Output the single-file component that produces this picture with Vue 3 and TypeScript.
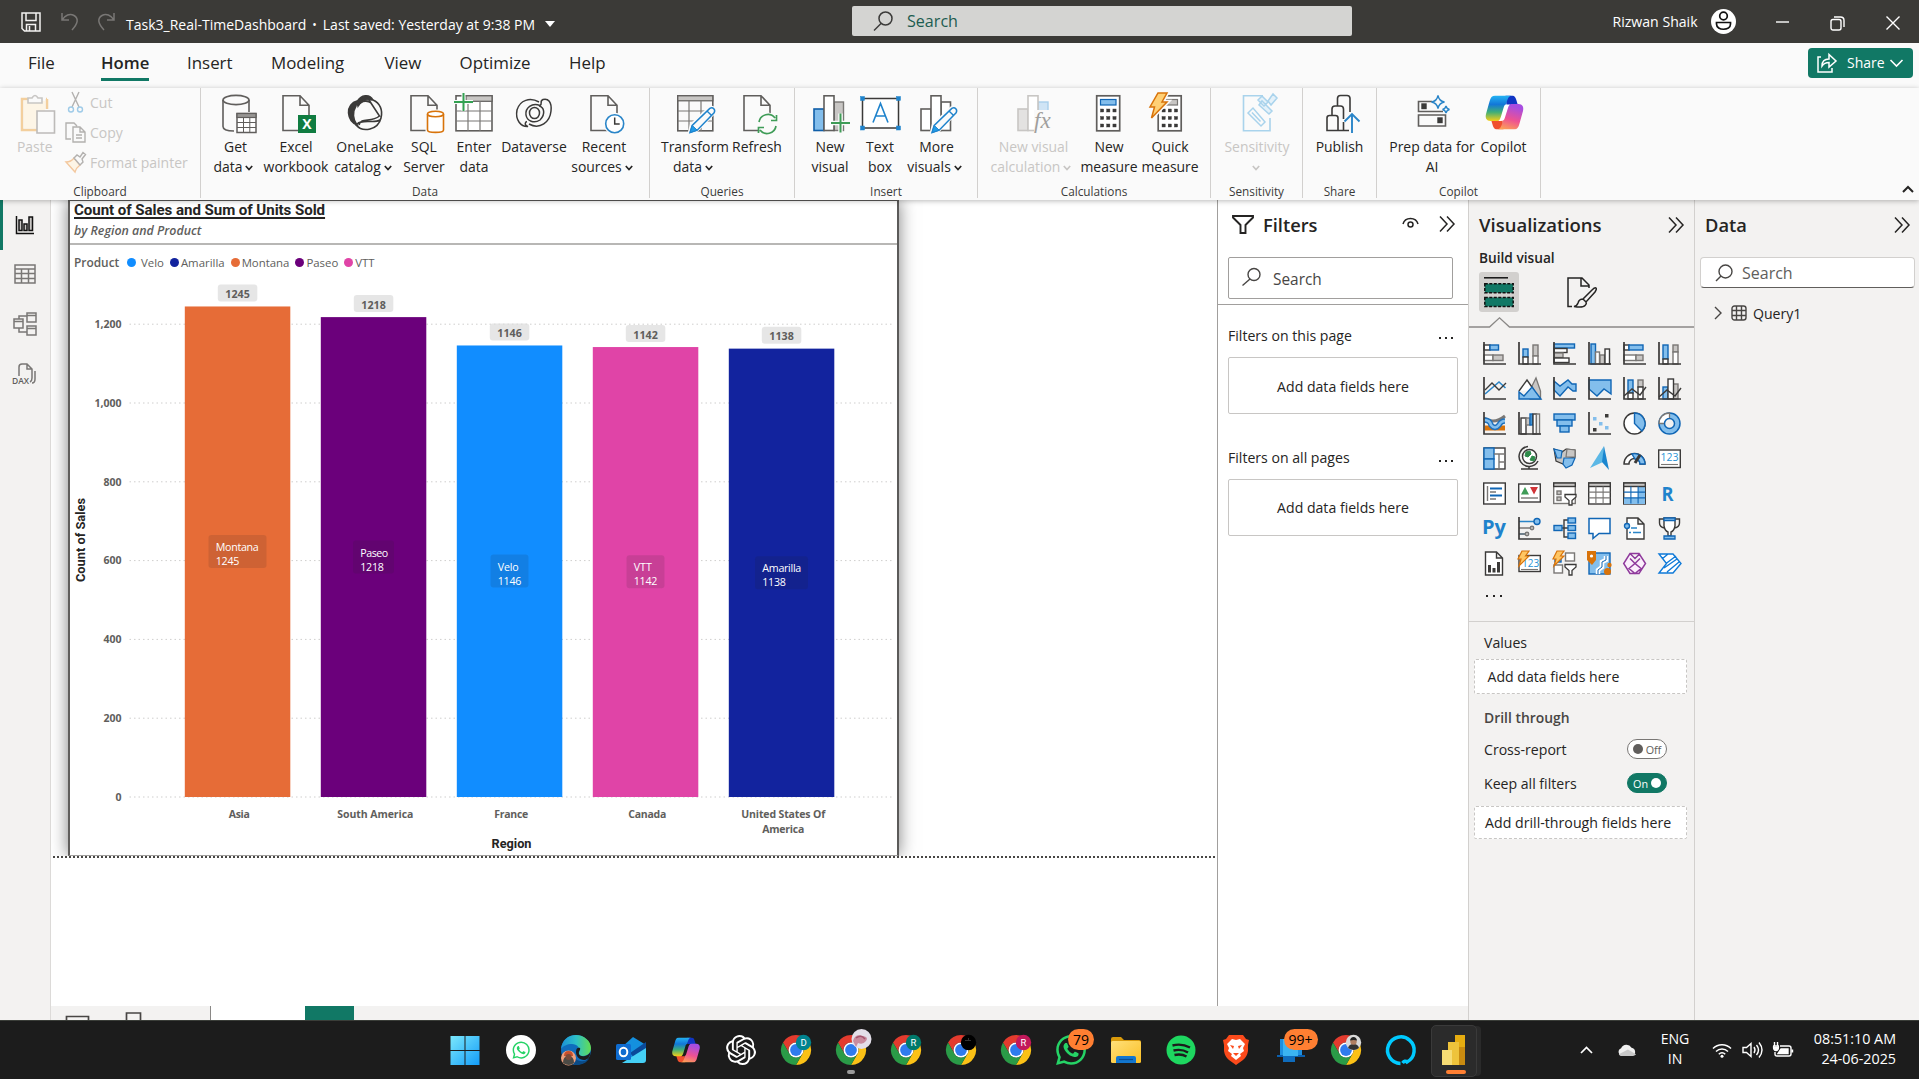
<script setup lang="ts">
interface RibbonItem { icon: string; lines: string[]; w: number; caret?: boolean; off?: boolean }
interface RibbonGroup { name: string; w: number; pad: number; items: RibbonItem[] }

const INK = '#3b3a39'
const GREY = '#797775'
const SILVER = '#c8c6c4'
const BLUE = '#1066b5'
const SKY = '#83beec'

const rect = (x: number, y: number, w: number, h: number, fill = '#fff', stroke = INK, sw = 1.4) =>
  `<rect x="${x}" y="${y}" width="${w}" height="${h}" fill="${fill}" stroke="${stroke}" stroke-width="${sw}"/>`
const line = (d: string, stroke = INK, sw = 1.4, fill = 'none') =>
  `<path d="${d}" fill="${fill}" stroke="${stroke}" stroke-width="${sw}"/>`
const dot = (x: number, y: number, r: number, fill: string, stroke = 'none', sw = 1.4) =>
  `<circle cx="${x}" cy="${y}" r="${r}" fill="${fill}" stroke="${stroke}" stroke-width="${sw}"/>`

const page = line('M9 1.7h17l9 9.5V36.5H9zM26 1.7v9.5h9', '#605e5c', 1.6, '#fafafa')
const pencil =
  line('M16.5 39l2-8 18-17q2.5-1 4 .5t.5 4L24 36z', '#fafafa', 3.5, '#fafafa') +
  line('M17 38.6l2.2-7.2 17.6-17q2.4-1.3 4 .4t.3 4L24.2 36.2z', '#1f83cc', 1.5, '#fafafa') +
  line('M17 38.6l2.2-7.2 5 4.8z', '#1f83cc', 1, '#1f9be8') + line('M34 17l4.6 4.6', '#1f83cc')
const bolt = line('M10-1h9l-5 9h5L3.5 24l3-11H2z', '#d8730a', 1.5, '#ffd075')
const keys = (x: number) => [15, 22.5, 30].map(y => [0, 6.2, 12.4].map(d => rect(x + d, y, 3.2, 3, INK, INK, 0.4)).join('')).join('')

const big: Record<string, string> = {
  getData:
    line('M9 6v26.5c0 3 5 4.500 11 4.500M35 6v12', '#605e5c', 1.6) +
    `<ellipse cx="22" cy="6" rx="13" ry="4.600" fill="none" stroke="#605e5c" stroke-width="1.6"/>` +
    rect(23, 19.500, 19, 19, '#fff', '#605e5c', 1.500) + rect(23, 19.500, 19, 4, '#979593', '#605e5c', 1.200) +
    line('M29.500 24v14M35.800 24v14M23 28.500h19M23 33.500h19', '#605e5c', 1),
  excel: page + rect(24.500, 21.500, 17, 17, '#107c41', '#107c41', 1) +
    '<text x="33" y="35" text-anchor="middle" font-size="14" font-weight="700" font-family="Open Sans, sans-serif" fill="#fff">X</text>',
  oneLake: line('M5.500 19C5 13 9 8 14 7L13 12C9 18 10 26 14 31C9 29 6 25 5.500 19z', INK, 1.500, INK) +
    line('M14 8C18 0 27 0 30 6C24 5 18 6 15 12z', INK, 1.500, INK) +
    line('M30 6C37 9 40 16 38 24C35 36 20 39 13 31C19 24 31 30 37 26M26 6L36.500 22C28 29 18 23 16 31M15 12C19 5 26 7 28 9', INK, 1.600),
  sql: page + rect(24, 16, 18, 24, '#fafafa', '#fafafa', 1) +
    line('M25.500 20v16c0 3.200 16 3.200 16 0V20', '#d8730a', 1.600, '#fff') +
    '<ellipse cx="33.500" cy="20" rx="8" ry="2.800" fill="#fff" stroke="#d8730a" stroke-width="1.600"/>',
  enter: rect(4, 1.800, 36, 35, '#fff', '#605e5c', 1.600) + rect(14, 1.800, 26, 5.500, '#c8c6c4', '#605e5c', 1.200) +
    line('M16 7v30M28 7v30M4 17h36M4 27h36', GREY, 1.200) + line('M2 8h19M11.500-1v18', '#fafafa', 4) + line('M2 8h19M11.500-1v18', '#33a152', 2),
  dataverse: line('M27 8C18 3 8 6 5 16C3 26 9 33 16 32.500C12 31 13 28 15 27.500M17 30C28 36 38 28 39 17C40 8 36 4 31 5.500C27 7 31 10 28 11.500C20 8 13 14 14 21C15 27 22 30 28 26C34 20 32 13 27 12', INK, 1.500) +
    '<ellipse cx="22.500" cy="19" rx="5" ry="5.500" fill="none" stroke="#3b3a39" stroke-width="1.500"/>',
  recent: page + dot(32.700, 29.700, 11, '#fafafa') + dot(32.700, 29.700, 9, '#fff', '#2a85c8', 1.600) + line('M32.700 23.500V30h5', INK, 1.500),
  transform: rect(4.800, 1.800, 35, 35, '#fafafa', '#605e5c', 1.600) + rect(4.800, 1.800, 35, 5, '#c8c6c4', '#605e5c', 1.200) +
    line('M16 7v30M28 7v30M5 17h35M5 27h35', GREY, 1.200) + pencil,
  refresh: page + dot(32.500, 29.500, 11, '#fafafa') +
    line('M24 28a9 9 0 0 1 16-4M41.500 21v5.500H36M41 32a9 9 0 0 1-16 4M23.500 39v-5.500H29', '#3f9c57', 1.700),
  newVisual: rect(6, 15, 10, 21.500, '#83beec', '#0f5ea8', 1.600) + rect(26, 8, 9.500, 28.500, SILVER, GREY) + rect(16, 1.800, 10, 34.700, '#fff', '#605e5c', 1.600) +
    line('M23 29h19M32.500 19.500v19', '#fafafa', 4.500) + line('M23 29h19M32.500 19.500v19', '#3f9c57', 2),
  textBox: rect(4.500, 4.500, 36, 29.500, '#fff', INK, 1.500) +
    [[4.500, 4.500], [40.500, 4.500], [4.500, 34], [40.500, 34]].map(([x, y]) => rect(x - 2, y - 2, 4, 4, '#1f83cc', '#1f83cc', 0.500)).join('') +
    line('M15 28.500L22.500 9.500 30 28.500M17.500 22h10', '#1f83cc', 1.600),
  moreVisuals: rect(6, 15, 10, 21.500, '#fff', '#605e5c', 1.600) + rect(26, 8, 9.500, 28.500, '#fff', '#605e5c', 1.600) + rect(16, 1.800, 10, 34.700, '#fff', '#605e5c', 1.600) + pencil,
  visualCalc: rect(6, 15, 10, 21.500, '#e3e2e1', '#c8c6c4', 1.600) + rect(26, 8, 10, 12, '#cfe4f5', '#a9cfec', 1.400) + rect(16, 1.800, 10, 34.700, '#fff', '#c8c6c4', 1.600) +
    '<rect x="22" y="16" width="22" height="24" fill="#fafafa"/><text x="22" y="34" font-size="23" font-style="italic" font-family="Liberation Serif, serif" fill="#a19f9d">fx</text>',
  newMeasure: rect(9.700, 1.800, 23, 35, '#fff', '#605e5c', 1.700) + rect(13.500, 5.500, 15.500, 5.500, SKY, BLUE, 1.200) + keys(13.500),
  quick: rect(10.200, 1.800, 23, 35, '#fff', '#605e5c', 1.700) + rect(14, 5.500, 15.500, 5.500, SILVER, GREY, 1.200) + keys(14) +
    line('M10-1h9l-5 9h5L3.500 24l3-11H2z', '#fafafa', 4.500, '#fafafa') + bolt,
  sensitivity: line('M28 1.700H8.500v35h26.500V24', '#a9d3ec', 1.600) +
    line('M13 19l5-5 12 14-4 4zM17 18.500l8.500 9', '#a9d3ec', 1.500) + line('M23 6l4-4 6 6-4 4zM33 7l5-7 4 4-6 7zM24 11l10 9 3-3-10-10z', '#a9d3ec', 1.500, '#e4f1f9'),
  publish: line('M32 18V4.500q0-3-3-3h-6.500q-3 0-3 3V12M14 21.500v-6.500q0-3 3-3h5.500q3 0 3 3V25M25.500 28v8.500M9 36.500V24q0-2.500 2.500-2.500h6q2.500 0 2.500 2.500v12.500zM8.500 36.500H31', INK, 1.600) +
    line('M34 39V20M26.500 27.500L34 20l7.500 7.500', '#2a85c8', 1.900),
  prep: line('M22 7.500H8.500v10H33M8.500 21h27v11h-27z', '#605e5c', 1.600) + rect(12, 10, 4, 4.500, INK, INK) + rect(28, 24, 4, 4.500, INK, INK) +
    line('M28 1.500q1 5.500 6.500 6.500-5.500 1-6.500 6.500-1-5.500-6.500-6.500 5.500-1 6.500-6.500zM36 12q.6 2.800 3.500 3.500-2.900.7-3.500 3.500-.6-2.800-3.500-3.500 2.900-.7 3.500-3.500z', '#2a85c8', 1.400, '#fafafa'),
  copilot: '<use href="#copilot-mark" x="3" y="1.500" width="39" height="34" color="#fff"/>',
}

const groups: RibbonGroup[] = [
  { name: 'Data', w: 449, pad: 11, items: [
    { icon: 'getData', lines: ['Get', 'data'], w: 47, caret: true },
    { icon: 'excel', lines: ['Excel', 'workbook'], w: 74 },
    { icon: 'oneLake', lines: ['OneLake', 'catalog'], w: 64, caret: true },
    { icon: 'sql', lines: ['SQL', 'Server'], w: 54 },
    { icon: 'enter', lines: ['Enter', 'data'], w: 46 },
    { icon: 'dataverse', lines: ['Dataverse'], w: 74 },
    { icon: 'recent', lines: ['Recent', 'sources'], w: 66, caret: true },
  ] },
  { name: 'Queries', w: 145, pad: 11, items: [
    { icon: 'transform', lines: ['Transform', 'data'], w: 68, caret: true },
    { icon: 'refresh', lines: ['Refresh'], w: 56 },
  ] },
  { name: 'Insert', w: 183, pad: 11, items: [
    { icon: 'newVisual', lines: ['New', 'visual'], w: 48 },
    { icon: 'textBox', lines: ['Text', 'box'], w: 52 },
    { icon: 'moreVisuals', lines: ['More', 'visuals'], w: 61, caret: true },
  ] },
  { name: 'Calculations', w: 233, pad: 12, items: [
    { icon: 'visualCalc', lines: ['New visual', 'calculation'], w: 87, caret: true, off: true },
    { icon: 'newMeasure', lines: ['New', 'measure'], w: 64 },
    { icon: 'quick', lines: ['Quick', 'measure'], w: 58 },
  ] },
  { name: 'Sensitivity', w: 92, pad: 11, items: [{ icon: 'sensitivity', lines: ['Sensitivity', ''], w: 70, caret: true, off: true }] },
  { name: 'Share', w: 74, pad: 11, items: [{ icon: 'publish', lines: ['Publish'], w: 51 }] },
  { name: 'Copilot', w: 164, pad: 11, items: [
    { icon: 'prep', lines: ['Prep data for', 'AI'], w: 88 },
    { icon: 'copilot', lines: ['Copilot'], w: 55 },
  ] },
]

const tabs = [
  { t: 'File', w: 73 }, { t: 'Home', w: 86 }, { t: 'Insert', w: 84 }, { t: 'Modeling', w: 113.5 },
  { t: 'View', w: 75 }, { t: 'Optimize', w: 109.5 }, { t: 'Help', w: 60 },
]

const axis = line('M1 0v22h22', INK, 1.700)
const grid3 = (x: number, y: number, w: number, h: number, c: string) =>
  line(`M${x + w / 3} ${y}v${h}M${x + (2 * w) / 3} ${y}v${h}M${x} ${y + h / 3}h${w}M${x} ${y + (2 * h) / 3}h${w}`, c, 1.100)
const num = (x: number, y: number, s: number) =>
  `<text x="${x}" y="${y}" font-size="${s}" font-family="Open Sans, sans-serif" fill="#2a93d5">123</text>`
const smallBolt = line('M4-1h7l-3.500 5H11L1 14l2-7H0z', '#d8730a', 1.200, '#ffc663')
const funnel = line('M12 12.500h11v2.500l-4 3.500V23h-3v-4.500L12 15z', INK, 1.300, '#fff')

const visuals: string[] = [
  rect(1, 3, 6, 5) + rect(7, 3, 8.500, 5, SKY, BLUE) + rect(1, 13, 9, 5.500, '#fff', GREY) + rect(10, 13, 10, 5.500, SILVER, GREY) + axis,
  rect(5, 7, 5, 8, SKY, BLUE) + rect(5, 15, 5, 7) + rect(15, 3, 5, 11, SILVER, GREY) + rect(15, 14, 5, 8, '#fff', GREY) + axis,
  rect(1, 2, 20.500, 4, SKY, BLUE) + rect(1, 6.500, 13, 4) + rect(1, 11, 9, 4.500, SILVER, GREY) + rect(1, 16, 15, 4.500) + axis,
  rect(3, 2, 4.500, 20, SKY, BLUE) + rect(7.500, 10, 4, 12, '#fff', GREY) + rect(12, 13, 4.500, 9, SILVER, GREY) + rect(17, 7, 4.500, 15) + axis,
  rect(1, 3, 5, 5) + rect(6, 3, 14, 5, SKY, BLUE) + rect(1, 13, 12, 5.500, '#fff', GREY) + rect(13, 13, 7, 5.500, SILVER, GREY) + axis,
  rect(5, 3, 5, 14, SKY, BLUE) + rect(5, 17, 5, 5) + rect(15, 3, 5, 7, SILVER, GREY) + rect(15, 10, 5, 12, '#fff', GREY) + axis,
  line('M2 17L16 5l6.500 6', '#2a85c8', 1.600) + line('M2 13l7-7 7 7 7-7') + axis,
  line('M12 13L18 1l4.500 13v8H12z', GREY, 1.300, SILVER) + line('M1 14L9 3l7 10', INK, 1.400, '#fff') + line('M1 22v-7l5 4 8-9 9 12z', BLUE, 1.400, SKY),
  line('M1 4l6 5 8-6 4 4h4v7h-3l-5-4-8 9-6-6z', BLUE, 1.400, SKY) + axis,
  line('M1 3h22v14l-7-5-7 7-8-7z', BLUE, 1.400, SKY) + axis,
  rect(5, 3, 5, 13, SKY, BLUE) + rect(5, 16, 5, 6) + rect(15, 3, 5, 7, SILVER, GREY) + rect(15, 10, 5, 12) + line('M1 19l8-7 8 6 6-8') + axis,
  rect(5, 10, 5, 12, SKY, BLUE) + rect(15, 7, 5, 15, SILVER, GREY) + rect(10, 2, 5.500, 20) + line('M1 20l8-7 8 6 6-8') + axis,
  line('M2 16h20', '#d8730a', 5) + line('M1 6q10 7 21-2', GREY, 3, 'none') + line('M1 8q6 0 7 5 4 5 8 0 2-4 6-4', '#1f72bd', 5.500) + line('M1 8q6 0 7 5 4 5 8 0 2-4 6-4', SKY, 2.700) + axis,
  rect(3, 6, 5, 16) + rect(8, 6, 4, 7, SILVER, GREY) + rect(12, 2, 2.500, 11, '#4e9edb', BLUE) + rect(15, 2, 3.500, 20) + rect(18.500, 2, 3, 20, '#fff', GREY) + axis,
  rect(1, 2, 21, 6, SKY, BLUE) + rect(4, 8, 15, 6, SKY, BLUE) + rect(7, 14, 9, 6, SKY, BLUE),
  [[5, 5, SKY], [17, 2, INK], [11, 10, SKY], [17, 14, SKY], [5, 16, INK]].map(([x, y, c]) => `<rect x="${x}" y="${y}" width="3.500" height="3.500" fill="${c}"/>`).join('') + axis,
  dot(11.500, 11.500, 10.500, '#fff', INK, 1.500) + line('M11.500 1v10.500l7.400 7.400A10.500 10.500 0 0 0 11.500 1z', BLUE, 1.400, SKY),
  dot(11.500, 11.500, 10.500, SKY, BLUE, 1.500) + line('M11.500 1A10.500 10.500 0 0 0 1 11.500h6A5 5 0 0 1 11.500 6.500z', GREY, 1.300, '#fff') + dot(11.500, 11.500, 5, '#f3f2f1', BLUE, 1.500),
  rect(1, 1, 21, 21) + rect(1, 1, 10, 11, SKY, BLUE) + rect(1, 12, 10, 10, SKY, BLUE) + line('M11 7h11M16 7v15M16 15h6', GREY),
  dot(11.500, 9.500, 7, '#fff', INK, 1.500) + line('M8 5l4-1 1 3-3 3-3-1zM14 9l3 1-1 4-4-1z', '#2e8b4a', 1, '#2e8b4a') + line('M10-.5A10 10 0 1 0 20 14M11 19v3M3 22h17', INK, 1.500),
  line('M1 2l8 3 4-3 9 1v7l-9 2-3 5-7-3z', INK, 1.200, SILVER) + line('M1 2l8 2-1 7H4zM11 11h11l-3 7-6 3-3-4z', BLUE, 1.200, SKY) + line('M14 2l8 1v7h-9z', GREY, 1.200, SILVER),
  '<path d="M16-1L2 21l13-6z" fill="#5bb8e6"/><path d="M16-1l5 24-7-8z" fill="#1a86cf"/>',
  line('M1 17a10.500 10.500 0 0 1 21 0h-5a5.500 5.500 0 0 0-11 0z', INK, 1.400, '#fff') + line('M9 7a10.500 10.500 0 0 1 13 10h-5a5.500 5.500 0 0 0-5-5z', BLUE, 1.400, SKY) + line('M17 8l-5 8', INK, 3),
  rect(0.700, 3, 21.600, 17.500, '#fff', INK, 1.400) + num(2.500, 14, 10.500) + line('M3 17.500h17', GREY, 1.100),
  rect(0.700, 1, 21.600, 21) + line('M4.500 4v15M7 10h6M7 17h6', GREY) + line('M7 6.500h12M7 13.500h12', '#1066b5', 2),
  rect(0.700, 2, 21.600, 18) + '<path d="M3 12.500L7 5l4 7.500z" fill="#3f9c57"/><path d="M12 5h8l-4 7.500z" fill="#d13438"/>' + line('M3 16h17', GREY),
  rect(0.700, 1, 21.600, 20.500, '#fff', GREY) + rect(0.700, 1, 21.600, 3.500, SILVER, INK) + rect(4, 9, 4, 3.500, SILVER, GREY) + rect(4, 15, 4, 3.500, SILVER, GREY) + funnel,
  rect(0.700, 1, 21.600, 21) + rect(0.700, 1, 21.600, 3.500, SILVER, INK) + grid3(0.700, 4.500, 21.600, 17, GREY),
  rect(0.700, 1, 21.600, 21) + '<path d="M15 5h7v17H1v-6h14z" fill="#83beec"/>' + rect(0.700, 1, 21.600, 3.500, SILVER, INK) + grid3(0.700, 4.500, 21.600, 17, '#1066b5'),
  '<text x="3.500" y="19" font-size="20" font-weight="700" font-family="Open Sans, sans-serif" fill="#1f83cc" textLength="12" lengthAdjust="spacingAndGlyphs">R</text>',
  '<text x="-1" y="17" font-size="20" font-weight="700" font-family="Open Sans, sans-serif" fill="#1f83cc" textLength="24" lengthAdjust="spacingAndGlyphs">Py</text>',
  line('M1 4.500h15M1 17h8', '#2a85c8') + line('M1 11h12M1 17h7', GREY) + dot(19, 4.500, 3, SKY, BLUE) + dot(14, 11, 1.700, SILVER, GREY) + dot(9, 17, 1.700, SILVER, GREY) + axis,
  line('M8 11h3V3h4M11 11h4M11 11v9h4') + rect(1, 8.500, 8, 5, SKY, BLUE) + rect(15, 1, 7.500, 5, SKY, BLUE) + rect(15, 8.500, 7.500, 5, SKY, BLUE) + rect(15, 16, 7.500, 5.500, SKY, BLUE),
  line('M1 1.500h21v15H11L5 21.500v-5H1z', BLUE, 1.500, '#fff'),
  line('M4 8V1h11l6 6v15H4V12M15 1v6h6', INK, 1.400, '#fff') + dot(4, 9, 2.500, SKY, BLUE) + line('M8 11h6M10 15.500h8M6 15.500h2', '#2a85c8'),
  line('M6 2H1.500v4q0 4 5 5M17 2h4.500v4q0 4-5 5') + line('M6 1h11v8q-1 5-4 6v4h-3v-4q-3-1-4-6z', INK, 1.400, '#fff') + line('M6 1h11v2.500H6zM6 19h11v3H6z', BLUE, 1.300, SKY),
  line('M2.500 0h11l6 6v17h-17zM13.500 0v6h6', INK, 1.400, '#fff') + '<path d="M5 13h3v7.500H5zM9.500 16h3v4.500h-3zM14 10h3v10.500h-3z" fill="#3b3a39"/>',
  rect(1, 3.500, 21.300, 16, '#fff', INK) + num(4, 15, 10) + line('M3 17.500h17', GREY, 1.100) + smallBolt,
  rect(12.500, 1, 9, 8, '#fff', GREY) + rect(1, 13, 8.500, 8, '#fff', GREY) + rect(2, 5, 6, 5, SKY, BLUE) + funnel + smallBolt,
  rect(1, 1, 21, 21, SKY, BLUE) + line('M18 4v4l-4 2v5l-4 3v4', '#fff', 4.500) + line('M18 4v4l-4 2v5l-4 3v4', BLUE, 1) + '<path d="M-1-1h9v9l-4 5-5-5z" fill="#d8730a"/>' + dot(3.500, 4, 1.600, '#fff') + dot(19.500, 19.500, 3.500, '#d8730a') + dot(21.500, 13, 2.200, '#d8730a'),
  line('M7 1.500h9l6.500 10-6.500 10H7L.7 11.500zM7 1.500l5 5 5-5M7 6.500l5 5 5-5M6 16.500l6-5 6 5-6 5z', '#8f3a9c', 1.500, '#fbeffc'),
  line('M1 2h14l8 9.500-8 9.500H1l7.500-9.500zM4 7L10 2M8 11.500L18 4M6 16l13-9M9 20l12-10', '#0f7ad8', 1.400, '#fff'),
]

interface Bar { region: string[]; product: string; value: number; color: string; x: number; boxW: number; chip: number }
const bars: Bar[] = [
  { region: ['Asia'], product: 'Montana', value: 1245, color: '#e66c37', x: 185.3, boxW: 58, chip: 535 },
  { region: ['South America'], product: 'Paseo', value: 1218, color: '#6b007b', x: 321.3, boxW: 41, chip: 540.500 },
  { region: ['France'], product: 'Velo', value: 1146, color: '#118dff', x: 457.3, boxW: 38, chip: 554.500 },
  { region: ['Canada'], product: 'VTT', value: 1142, color: '#e044a7', x: 593.3, boxW: 38, chip: 555.300 },
  { region: ['United States Of', 'America'], product: 'Amarilla', value: 1138, color: '#12239e', x: 729.3, boxW: 53, chip: 556.300 },
]
const productW: Record<string, number> = { Montana: 43, Paseo: 28, Velo: 21, VTT: 18, Amarilla: 39 }
const regionW: Record<string, number> = { Asia: 21, 'South America': 76, France: 34, Canada: 38, 'United States Of': 84, America: 42 }
const barTop = (v: number) => 797 - v * 0.394
const ticks = [0, 200, 400, 600, 800, 1000, 1200]
const legend = [
  { n: 'Velo', c: '#118dff' }, { n: 'Amarilla', c: '#12239e' }, { n: 'Montana', c: '#e66c37' },
  { n: 'Paseo', c: '#6b007b' }, { n: 'VTT', c: '#e044a7' },
]

const whatsapp = 'M17.472 14.382c-.297-.149-1.758-.867-2.03-.967-.273-.099-.471-.148-.67.15-.197.297-.767.966-.94 1.164-.173.199-.347.223-.644.075-.297-.15-1.255-.463-2.39-1.475-.883-.788-1.48-1.761-1.653-2.059-.173-.297-.018-.458.13-.606.134-.133.298-.347.446-.52.149-.174.198-.298.298-.497.099-.198.05-.371-.025-.52-.075-.149-.669-1.612-.916-2.207-.242-.579-.487-.5-.669-.51-.173-.008-.371-.01-.57-.01-.198 0-.52.074-.792.372-.272.297-1.04 1.016-1.04 2.479 0 1.462 1.065 2.875 1.213 3.074.149.198 2.096 3.2 5.077 4.487.709.306 1.262.489 1.694.625.712.227 1.36.195 1.871.118.571-.085 1.758-.719 2.006-1.413.248-.694.248-1.289.173-1.413-.074-.124-.272-.198-.57-.347m-5.421 7.403h-.004a9.87 9.87 0 01-5.031-1.378l-.361-.214-3.741.982.998-3.648-.235-.374a9.86 9.86 0 01-1.51-5.26c.001-5.45 4.436-9.884 9.888-9.884 2.64 0 5.122 1.03 6.988 2.898a9.825 9.825 0 012.893 6.994c-.003 5.45-4.437 9.884-9.885 9.884m8.413-18.297A11.815 11.815 0 0012.05 0C5.495 0 .16 5.335.157 11.892c0 2.096.547 4.142 1.588 5.945L.057 24l6.305-1.654a11.882 11.882 0 005.683 1.448h.005c6.554 0 11.89-5.335 11.893-11.893a11.821 11.821 0 00-3.48-8.413Z'
const knot = 'M22.2819 9.8211a5.9847 5.9847 0 0 0-.5157-4.9108 6.0462 6.0462 0 0 0-6.5098-2.9A6.0651 6.0651 0 0 0 4.9807 4.1818a5.9847 5.9847 0 0 0-3.9977 2.9 6.0462 6.0462 0 0 0 .7427 7.0966 5.98 5.98 0 0 0 .511 4.9107 6.051 6.051 0 0 0 6.5146 2.9001A5.9847 5.9847 0 0 0 13.2599 24a6.0557 6.0557 0 0 0 5.7718-4.2058 5.9894 5.9894 0 0 0 3.9977-2.9001 6.0557 6.0557 0 0 0-.7475-7.0729zm-9.022 12.6081a4.4755 4.4755 0 0 1-2.8764-1.0408l.1419-.0804 4.7783-2.7582a.7948.7948 0 0 0 .3927-.6813v-6.7369l2.02 1.1686a.071.071 0 0 1 .038.052v5.5826a4.504 4.504 0 0 1-4.4945 4.4944zm-9.6607-4.1254a4.4708 4.4708 0 0 1-.5346-3.0137l.142.0852 4.783 2.7582a.7712.7712 0 0 0 .7806 0l5.8428-3.3685v2.3324a.0804.0804 0 0 1-.0332.0615L9.74 19.9502a4.4992 4.4992 0 0 1-6.1408-1.6464zM2.3408 7.8956a4.485 4.485 0 0 1 2.3655-1.9728V11.6a.7664.7664 0 0 0 .3879.6765l5.8144 3.3543-2.0201 1.1685a.0757.0757 0 0 1-.071 0l-4.8303-2.7865A4.504 4.504 0 0 1 2.3408 7.872zm16.5963 3.8558L13.1038 8.364 15.1192 7.2a.0757.0757 0 0 1 .071 0l4.8303 2.7913a4.4944 4.4944 0 0 1-.6765 8.1042v-5.6772a.79.79 0 0 0-.407-.667zm2.0107-3.0231l-.142-.0852-4.7735-2.7818a.7759.7759 0 0 0-.7854 0L9.409 9.2297V6.8974a.0662.0662 0 0 1 .0284-.0615l4.8303-2.7866a4.4992 4.4992 0 0 1 6.6802 4.66zM8.3065 12.863l-2.02-1.1638a.0804.0804 0 0 1-.038-.0567V6.0742a4.4992 4.4992 0 0 1 7.3757-3.4537l-.142.0805L8.704 5.459a.7948.7948 0 0 0-.3927.6813zm1.0976-2.3654l2.602-1.4998 2.6069 1.4998v2.9994l-2.5974 1.4997-2.6067-1.4997Z'

const wedge = 'M-13-7.500A15 15 0 0 1 13-7.500H0A7.500 7.500 0 0 0-6.500 3.750z'
const chrome = `<g transform="translate(15 15)"><path d="${wedge}" fill="#e33b2e"/><path d="${wedge}" fill="#fbc116" transform="rotate(120)"/><path d="${wedge}" fill="#2a9b47" transform="rotate(240)"/><circle r="7.500" fill="#fff"/><circle r="5.900" fill="#2f7bee"/></g>`
const chromeWith = (letter: string, bg: string) =>
  chrome + dot(22.500, 7.500, 7.700, bg) + `<text x="22.500" y="11" text-anchor="middle" font-size="9.500" font-family="Roboto, sans-serif" fill="#fff">${letter}</text>`

interface TaskIcon { art: string; badge?: string; state?: string }
const tasks: TaskIcon[] = [
  { art: '<path d="M-.5 1h14v14h-14zM14.500 1h14v14h-14zM-.5 16h14v14h-14zM14.500 16h14v14h-14z" fill="url(#win)"/>' },
  { art: dot(15, 15, 15, '#fff') + `<path d="${whatsapp}" fill="#25d366" transform="translate(6.500 6.500) scale(.72)"/>` },
  { art: '<circle cx="15" cy="15" r="15" fill="#0f6cbd"/><path d="M0 14C1 5 7 0 15 0s15 6 15 13c0 5-4 8-8 8-3 0-5-1-4-3 2-5-2-9-7-9C6 9 2 11 0 14z" fill="url(#edge)"/><path d="M11 17c0 6 6 10 12 9 3-.5 5-2 6-4-3 6-8 8-14 8-5 0-4-8-4-13z" fill="#0b4a85"/><path d="M18 19c1 2 3 2.500 6 2 2-.3 4-2 5.500-4C29 23 26 25 23 25c-5 0-8-4-8-8s2-5 4-4c1 2-2 3-1 6z" fill="#1c1c1c"/><circle cx="7.500" cy="23" r="7.500" fill="#eda07e"/><path d="M2 28q0-7 5.500-7t5.500 7q-5 4-11 0z" fill="#4b4a45"/><path d="M3 21q0-5 4.500-5t4.500 5z" fill="#c8502c"/><circle cx="7.500" cy="22" r="3" fill="#7a4a38"/>' },
  { art: '<path d="M6 12L17 2l13 8v7L12 26z" fill="#1490df"/><path d="M14 18L30 7v9L20 25z" fill="#0a4a9a"/><path d="M6 28L30 13v12q0 3-3 3z" fill="#45d0f5"/><rect x="0" y="9" width="15" height="16" rx="1.500" fill="#0f6cd0"/><ellipse cx="7.500" cy="17" rx="3.800" ry="4.300" fill="none" stroke="#fff" stroke-width="2"/>' },
  { art: '<use href="#copilot-mark" x="1" y="2.500" width="28" height="25" color="#1c1c1c"/>' },
  { art: `<path d="${knot}" fill="#fff" transform="scale(1.250)"/>` },
  { art: chromeWith('D', '#00838f') },
  { art: chrome + dot(25.500, 4, 10, '#e3dfe9') + '<path d="M17 6q2-8 10-5 6 1 3 5-3 4-8 2l-2 4z" fill="#c98b9e"/><path d="M20 3q5-4 9 1" stroke="#a3546e" fill="none" stroke-width="1.500"/>', state: 'dot' },
  { art: chromeWith('R', '#00796b') },
  { art: chrome + dot(22.500, 7.500, 7.700, '#000') + line('M19 5.500h6M22.500 3v3', '#333', 1) },
  { art: chromeWith('R', '#c2185b') },
  { art: `<path d="${whatsapp}" fill="#25d366" transform="translate(0 0) scale(1.250)"/>`, badge: '79' },
  { art: '<path d="M0 4q0-2 2-2h8l3 3h15q2 0 2 2v5H0z" fill="#d99a0b"/><rect x="0" y="6" width="30" height="22" rx="1.500" fill="url(#fold)"/><path d="M5 28v-5q0-2 2-2h16q2 0 2 2v5z" fill="#1276cf"/><path d="M8 24.500h14" stroke="#0a4d92" stroke-width="1.200"/>' },
  { art: dot(15, 15, 14.500, '#1ed760') + line('M6.500 10.500q9-2.500 17.500 2M7.500 15.500q8-2 14.500 2M8.500 20q7-1.500 12 1.500', '#1c1c1c', 2.400) },
  { art: '<path d="M8 0h14l3 4 3 1-1 5 0 6q-1 6-5 9l-7 5-7-5q-4-3-5-9V10L2 5l3-1z" fill="#fb4a1b"/><path d="M15 5l4-1 5 5-2 4 1 3-4 3 1 2-5 4-5-4 1-2-4-3 1-3-2-4 5-5z" fill="#fff"/><path d="M9 10l4 1-1 3zM21 10l-4 1 1 3zM12 18h6l-3 3z" fill="#fb4a1b"/>' },
  { art: '<path d="M4 4h22v16H4z" fill="#1d8fe0"/><path d="M1 20h28v2H1z" fill="#0b5fae"/><path d="M7 4h15v17H7z" fill="#3bb4f2"/><path d="M7 21h12v6H7z" fill="#0f6cbd"/>', badge: '99+', state: 'wide' },
  { art: chrome + dot(22.500, 7.500, 7.700, '#d9d9d9') + '<path d="M17 13q1-4 5.500-4t5.500 4q-5 4-11 0z" fill="#333"/><circle cx="22.500" cy="6.500" r="3.200" fill="#b07f62"/><path d="M19 5.500Q19.500 2 22.500 2t3.500 3.500q-3-1-7 0z" fill="#222"/>' },
  { art: '<path d="M14.500 28.500A13.300 13.300 0 1 1 21 27q-2-2-4.500 1" fill="none" stroke="#00caff" stroke-width="3.500"/>' },
  { art: '<rect x="14" y="0" width="10" height="30" fill="#c98b10"/><rect x="14" y="0" width="10" height="12" fill="#e6ad10"/><rect x="7" y="7" width="11" height="23" fill="#eec33b"/><rect x="1" y="15" width="10" height="15" fill="#f6dc74"/>', state: 'active' },
]
</script>

<template>
  <div class="app">
    <svg class="defs" width="0" height="0">
      <defs>
        <linearGradient id="cool" x1="0" y1="0" x2="0" y2="1"><stop offset="0" stop-color="#24b4f4" /><stop offset=".35" stop-color="#1277d8" /><stop offset=".65" stop-color="#3fae79" /><stop offset="1" stop-color="#f7cf16" /></linearGradient>
        <linearGradient id="warm" x1=".3" y1="0" x2="0" y2="1"><stop offset="0" stop-color="#a84de0" /><stop offset=".5" stop-color="#ee5292" /><stop offset="1" stop-color="#ffae4b" /></linearGradient>
        <linearGradient id="win" x1="0" y1="0" x2="1" y2="1"><stop offset="0" stop-color="#7be8fc" /><stop offset="1" stop-color="#139cf8" /></linearGradient>
        <linearGradient id="edge" x1="0" y1="0" x2="1" y2="0"><stop offset="0" stop-color="#1a8fd8" /><stop offset=".5" stop-color="#2dbfc8" /><stop offset="1" stop-color="#63dd52" /></linearGradient>
        <linearGradient id="fold" x1="0" y1="0" x2="1" y2="1"><stop offset="0" stop-color="#ffe07a" /><stop offset="1" stop-color="#fbbf24" /></linearGradient>
        <symbol id="copilot-mark" viewBox="0 0 38 34">
          <path d="M20 0h6c3 0 4 1.500 5 5l1.500 5H21z" fill="#1035c4" />
          <path d="M18 34h-6c-3 0-4-1.500-5-5l-1.500-5H17z" fill="#f0502e" />
          <path d="M9.500 0H26c-2.500.5-3.500 2.500-4.500 5.500L17 20c-1 4-2.500 5.500-6 5.500H5C1 25.500-.5 22.500.5 18.500L4 6C5 2 6.500 0 9.500 0z" fill="url(#cool)" />
          <path d="M28.500 34H12c2.500-.5 3.500-2.500 4.500-5.500L21 14c1-4 2.500-5.500 6-5.500h6c4 0 5.500 3 4.500 7L34 28c-1 4-2.500 6-5.500 6z" fill="url(#warm)" />
          <path d="M20.500 9h4c-1 .8-1.700 2-2.200 4l-3 9.500c-.8 2.200-1.800 3-3.800 3h-2.800c1.300-.8 2-2 2.600-4L18 12.500c.5-1.800 1.200-3.500 2.500-3.500z" fill="currentColor" />
        </symbol>
      </defs>
    </svg>

    <header class="titlebar">
      <div class="quick">
        <svg width="20" height="20" viewBox="0 0 20 20" fill="none" stroke="#f3f2f1" stroke-width="1.500"><path d="M1 1h18v18H3.500L1 16.500zM5 1v7.500h10V1M5.500 19v-6.500h9V19M8.500 14v5" /></svg>
        <svg width="18" height="19" viewBox="0 0 18 19" fill="none" stroke="#797775" stroke-width="1.500"><path d="M1 1v7h7M1 8C4 3 9 1 13 3.500c5 3 4 8-2 14.500" /></svg>
        <svg width="18" height="19" viewBox="0 0 18 19" fill="none" stroke="#797775" stroke-width="1.500"><path d="M17 1v7h-7M17 8C14 3 9 1 5 3.500c-5 3-4 8 2 14.500" /></svg>
      </div>
      <div class="doc"><span>Task3_Real-TimeDashboard</span><i>•</i><span>Last saved: Yesterday at 9:38 PM</span><b class="tri"></b></div>
      <div class="topsearch">
        <svg width="20" height="20" viewBox="0 0 20 20" fill="none" stroke="#3b3a39" stroke-width="1.500"><circle cx="12.500" cy="7.500" r="6.500" /><path d="M8 12.500L1 19.500" /></svg>
        <span>Search</span>
      </div>
      <div class="win">
        <span class="user">Rizwan Shaik</span>
        <svg class="avatar" width="25" height="25" viewBox="0 0 25 25" fill="none" stroke="#111" stroke-width="1.700"><circle cx="12.500" cy="12.500" r="12.500" fill="#fff" stroke="none" /><circle cx="12.500" cy="7" r="3.800" /><path d="M5.500 13.500h14v1.500c0 7-14 7-14 0z" /></svg>
        <svg class="w1" width="14" height="14" viewBox="0 0 14 14" stroke="#fff" stroke-width="1.400"><path d="M0 7h13" /></svg>
        <svg class="w2" width="15" height="15" viewBox="0 0 15 15" fill="none" stroke="#fff" stroke-width="1.400"><rect x="1" y="3.500" width="10" height="10.500" rx="2" /><path d="M4 1h6.500q3.500 0 3.500 3.500V11" /></svg>
        <svg class="w3" width="14" height="14" viewBox="0 0 14 14" stroke="#fff" stroke-width="1.400"><path d="M.5.5l13 13M13.500.5l-13 13" /></svg>
      </div>
    </header>

    <nav class="tabs">
      <div v-for="t in tabs" :key="t.t" class="tabcell" :style="{ width: t.w + 'px' }"><span :class="{ on: t.t === 'Home' }">{{ t.t }}</span></div>
      <button class="share">
        <svg width="20" height="20" viewBox="0 0 20 20" fill="none" stroke="#fff" stroke-width="1.500"><path d="M4 4H1v15h14v-4M5 13C5 8 8 6 12 6V1.500l7 6.500-7 6v-4.500C9 9.500 7 10 5 13z" /></svg>
        <span>Share</span>
        <svg width="13" height="9" viewBox="0 0 13 9" fill="none" stroke="#fff" stroke-width="1.600"><path d="M.5 1l6 6 6-6" /></svg>
      </button>
    </nav>

    <section class="ribbon">
      <div class="group clip">
        <div class="clipbody">
          <div class="paste">
            <svg width="36" height="40" viewBox="0 0 36 40" fill="none" stroke-width="1.600"><path d="M8 5H2v31h16M27 5h-1M27 5v10" stroke="#f3cf9d" stroke-width="2.500" /><path d="M4 7h21v27H4z" fill="#fdf5e6" /><path d="M8 9V4h4q3-5 6 0h4v5z" stroke="#c8c6c4" fill="#fafafa" /><path d="M17 17h17.500v22H17z" stroke="#bdbbb9" fill="#fafafa" /></svg>
            <span>Paste</span>
          </div>
          <div class="cliplist">
            <div><svg width="21" height="21" viewBox="0 0 21 21" fill="none" stroke="#b3b1af" stroke-width="1.400"><path d="M7 0l7 15M14 0L7 15" /><g stroke="#9fcbe8"><circle cx="6" cy="17.500" r="2.500" /><circle cx="15" cy="17.500" r="2.500" /></g></svg>Cut</div>
            <div><svg width="21" height="21" viewBox="0 0 21 21" fill="none" stroke="#b3b1af" stroke-width="1.400"><path d="M6 17H1V1h8l3 3M8 5h7l5 5v10H8zM15 5v5h5M11 13h6M11 16h6" /></svg>Copy</div>
            <div><svg width="21" height="21" viewBox="0 0 21 21" fill="none" stroke="#b3b1af" stroke-width="1.400"><path d="M1 10q5 0 8-4l6 7q-4 3-5 7z" stroke="#f3c79d" fill="#fdf5e6" /><path d="M9 6l3-3 3 2 3-4.500 2.500 2L17 7l1 3-3 3z" fill="#fafafa" /></svg>Format painter</div>
          </div>
        </div>
        <div class="gname">Clipboard</div>
      </div>
      <div v-for="g in groups" :key="g.name" class="group" :style="{ width: g.w + 'px' }">
        <div class="items" :style="{ paddingLeft: g.pad + 'px' }">
          <div v-for="it in g.items" :key="it.icon" class="item" :class="{ off: it.off, drop: it.caret }" :style="{ width: it.w + 'px' }">
            <svg width="44" height="40" viewBox="0 0 44 40" fill="none" v-html="big[it.icon]"></svg>
            <div v-for="(l, i) in it.lines" :key="i" class="lbl">{{ l }}<svg v-if="it.caret && i === 1" class="car" width="8" height="6" viewBox="0 0 8 6" fill="none" stroke="currentColor" stroke-width="1.700"><path d="M.8 1L4 4.500 7.200 1" /></svg></div>
          </div>
        </div>
        <div class="gname">{{ g.name }}</div>
      </div>
      <svg class="collapse" width="12" height="8" viewBox="0 0 12 8" fill="none" stroke="#252423" stroke-width="2"><path d="M1 7l5-5 5 5" /></svg>
    </section>

    <main class="body">
      <aside class="rail">
        <div class="railcell sel"><svg width="24" height="24" viewBox="0 0 24 24" fill="#c8c6c4" stroke="#111" stroke-width="1.500"><path d="M3.500 3v17.500H21" fill="none" /><path d="M6 7h3v10.500H6zM11 11h3v6.500h-3zM16 4h3.500v13.500H16z" /></svg></div>
        <div class="railcell"><svg width="24" height="24" viewBox="0 0 24 24" fill="none" stroke="#797775" stroke-width="1.500"><path d="M2 3h20v18H2zM2 7h20M2 11.500h20M2 16.500h20M8.500 7v14M15.500 7v14" /></svg></div>
        <div class="railcell"><svg width="24" height="24" viewBox="0 0 24 24" fill="none" stroke="#797775" stroke-width="1.500"><path d="M1 7h9v9H1zM1 9.500h9M14 1h9v9h-9zM14 3.500h9M14 14h9v9h-9zM14 16.500h9M6 7V4h8M6 16v4h8" /></svg></div>
        <div class="railcell"><svg width="24" height="24" viewBox="0 0 24 24" fill="none" stroke="#797775" stroke-width="1.500"><path d="M6 14V5q0-3 3-3h5l5 5v9q0 3-2 4M14 2v5h5M22 9v8q0 4-3 4" /><text x="-1" y="21.500" font-size="8.500" font-family="Open Sans, sans-serif" font-weight="600" fill="#605e5c" stroke="none" textLength="17">DAX</text></svg></div>
      </aside>

      <div class="work">
        <div class="main">
          <section class="canvas">
            <div class="sheet">
              <div class="card">
                <div class="cardhead">
                  <h1>Count of Sales and Sum of Units Sold</h1>
                  <h2>by Region and Product</h2>
                </div>
                <div class="legend"><b>Product</b><span v-for="(l, i) in legend" :key="l.n" :class="{ first: i === 0 }"><svg width="9" height="9" viewBox="0 0 9 9"><circle cx="4.500" cy="4.500" r="4.500" :fill="l.c" /></svg>{{ l.n }}</span></div>
                <svg class="plot" width="827" height="577" viewBox="70.500 276 827 577">
                  <line v-for="t in ticks" :key="t" x1="130" x2="892" :y1="797 - t * 0.394" :y2="797 - t * 0.394" stroke="#cfcecd" stroke-width="1" stroke-dasharray="1.500 3" />
                  <text v-for="t in ticks" :key="'l' + t" class="tick" x="122" :y="800.7 - t * 0.394" text-anchor="end">{{ t.toLocaleString('en-US') }}</text>
                  <g v-for="b in bars" :key="b.product">
                    <rect :x="b.x" :y="barTop(b.value)" width="105.500" :height="797 - barTop(b.value)" :fill="b.color" />
                    <rect :x="b.x + 33" :y="barTop(b.value) - 22" width="39.500" height="17" rx="3" fill="#dedede" fill-opacity=".75" />
                    <text class="val" :x="b.x + 52.700" :y="barTop(b.value) - 8.500" text-anchor="middle" textLength="24.500">{{ b.value }}</text>
                    <rect :x="b.x + 52.700 - b.boxW / 2" :y="b.chip" :width="b.boxW" height="33" rx="3" fill="#252423" fill-opacity=".12" />
                    <text class="inner" :x="b.x + 60 - b.boxW / 2" :y="b.chip + 16" :textLength="productW[b.product]">{{ b.product }}</text>
                    <text class="inner" :x="b.x + 60 - b.boxW / 2" :y="b.chip + 30" textLength="23.500">{{ b.value }}</text>
                    <text v-for="(r, i) in b.region" :key="r" class="cat" :x="b.x + 54.500" :y="818 + i * 15" text-anchor="middle" :textLength="regionW[r]">{{ r }}</text>
                  </g>
                  <text class="axis" x="512" y="847.500" text-anchor="middle" textLength="40" lengthAdjust="spacingAndGlyphs">Region</text>
                  <text class="axis" transform="translate(85.500 540) rotate(-90)" text-anchor="middle" textLength="84" lengthAdjust="spacingAndGlyphs">Count of Sales</text>
                </svg>
              </div>
            </div>
            <div class="dotted"></div>
          </section>

          <section class="filters">
            <div class="phead"><svg width="22" height="19" viewBox="0 0 22 19" fill="none" stroke="#252423" stroke-width="1.900"><path d="M1 1h20v1.500l-7.500 7.500v8h-5v-8L1 2.500z" /></svg><h3>Filters</h3>
              <svg class="eye" width="17" height="12" viewBox="0 0 17 12" fill="none" stroke="#252423" stroke-width="1.500"><path d="M1 7C3-.5 14-.5 16 7" /><circle cx="8.500" cy="7.500" r="2.500" /></svg>
              <svg width="16" height="16" viewBox="0 0 16 16" fill="none" stroke="#252423" stroke-width="1.500"><path d="M1 .5L8 8l-7 7.500M8 .5L15 8l-7 7.500" /></svg></div>
            <div class="fsearch"><svg width="19" height="18" viewBox="0 0 19 18" fill="none" stroke="#484644" stroke-width="1.400"><circle cx="12" cy="6.500" r="6" /><path d="M8 11L.5 17.500" /></svg><span>Search</span></div>
            <div class="rule"></div>
            <div class="fsec"><span>Filters on this page</span><span class="more"><i></i><i></i><i></i></span></div>
            <div class="fbox up1">Add data fields here</div>
            <div class="fsec two"><span>Filters on all pages</span><span class="more"><i></i><i></i><i></i></span></div>
            <div class="fbox">Add data fields here</div>
          </section>
        </div>
        <footer class="strip">
          <div class="views"><svg width="110" height="14" viewBox="0 0 110 14" fill="none" stroke="#484644" stroke-width="1.700"><path d="M3.500 14v-3.500h22V14" /><path d="M63.500 14V7h14v7" /></svg></div>
          <div class="ptab"></div>
          <div class="gtab"></div>
        </footer>
      </div>

      <section class="viz">
        <div class="phead"><h3>Visualizations</h3><svg width="16" height="16" viewBox="0 0 16 16" fill="none" stroke="#252423" stroke-width="1.500"><path d="M1 .5L8 8l-7 7.500M8 .5L15 8l-7 7.500" /></svg></div>
        <div class="build">Build visual</div>
        <div class="modes">
          <div class="mode"><svg width="30" height="30" viewBox="0 0 30 30"><path d="M0 .8h24" stroke="#111" stroke-width="1.500" /><g fill="#117865" stroke="#111" stroke-width="1.500" stroke-dasharray="3 1.500"><path d="M.8 6.800h28.400v9H.8zM.8 20.500h28.400v9H.8z" /></g></svg></div>
          <svg class="brush" width="30" height="31" viewBox="0 0 30 31" fill="none" stroke="#252423" stroke-width="1.500"><path d="M5 29.500H1V1h14l7 7v3M14 1v8h8M29 11q1 1-1 4l-9 10-3-3L25 13q3-3 4-2zM16 22q-4 0-5 4-1 3-4 3.500 9 1.500 11-1 2-2 1-3.500" /></svg>
        </div>
        <svg class="notch" width="225" height="11" viewBox="0 0 225 11" fill="none" stroke="#8a8886" stroke-width="1.300"><path d="M0 10h20.500L30.500.800l10 9.200H225" /></svg>
        <div class="vgrid"><svg v-for="(v, i) in visuals" :key="i" width="23" height="23" viewBox="0 0 23 23" fill="none" v-html="v"></svg></div>
        <div class="vmore"><i></i><i></i><i></i></div>
        <div class="wells">
          <div class="wl values">Values</div>
          <div class="well">Add data fields here</div>
          <div class="wl drill">Drill through</div>
          <div class="trow">Cross-report<span class="tog"><i></i>Off</span></div>
          <div class="trow">Keep all filters<span class="tog act">On<i></i></span></div>
          <div class="well low">Add drill-through fields here</div>
        </div>
      </section>

      <section class="data">
        <div class="phead"><h3>Data</h3><svg width="16" height="16" viewBox="0 0 16 16" fill="none" stroke="#252423" stroke-width="1.500"><path d="M1 .5L8 8l-7 7.500M8 .5L15 8l-7 7.500" /></svg></div>
        <div class="dsearch"><svg width="18" height="18" viewBox="0 0 18 18" fill="none" stroke="#484644" stroke-width="1.400"><circle cx="10.500" cy="7.500" r="6.500" /><path d="M6 12L1 17" /></svg>Search</div>
        <div class="query">
          <svg width="8" height="14" viewBox="0 0 8 14" fill="none" stroke="#484644" stroke-width="1.400"><path d="M1 1l6 6-6 6" /></svg>
          <svg width="16" height="16" viewBox="0 0 16 16" fill="none" stroke="#484644" stroke-width="1.400"><rect x="1" y="1" width="14" height="14" rx="2.500" /><path d="M1 5.500h14M1 10.500h14M5.500 1v14M10.500 1v14" /></svg>
          <span>Query1</span>
        </div>
      </section>
    </main>

    <footer class="taskbar">
      <div v-for="(t, i) in tasks" :key="i" class="task" :class="t.state">
        <svg width="30" height="30" viewBox="0 0 30 30" fill="none" overflow="visible" v-html="t.art"></svg>
        <span v-if="t.badge" class="badge">{{ t.badge }}</span>
      </div>
      <div class="tray">
        <svg class="up" width="13" height="8" viewBox="0 0 13 8" fill="none" stroke="#fff" stroke-width="1.700"><path d="M1 7l5.500-5.500L12 7" /></svg>
        <svg class="cloud" width="20" height="13" viewBox="0 0 22 14"><path d="M5 13a4.500 4.500 0 0 1-.5-8.500A6.500 6.500 0 0 1 16 4a4.700 4.700 0 0 1 1 9z" fill="#f0f0f0" /><path d="M2 11L12 6l9 5q-1.500 2-4 2H5q-2 0-3-2z" fill="#c9c9c9" /></svg>
        <div class="lang"><span>ENG</span><span>IN</span></div>
        <svg class="wifi" width="20" height="16" viewBox="0 0 20 16" fill="none" stroke="#fff" stroke-width="1.500"><path d="M1 6.500a12.500 12.500 0 0 1 18 0M4 9.500a8.500 8.500 0 0 1 12 0M6.800 12.200a4.500 4.500 0 0 1 6.400 0" /><circle cx="10" cy="14.300" r="1.500" fill="#fff" stroke="none" /></svg>
        <svg class="vol" width="21" height="18" viewBox="0 0 21 18" fill="none" stroke="#fff" stroke-width="1.400"><path d="M1 6.500h3.500L9 2.500v13l-4.500-4H1zM12 6q2 3 0 6M14.500 4q4 5 0 10M17 1.500q6 7.500 0 15" /></svg>
        <svg class="bat" width="21" height="18" viewBox="0 0 21 18" fill="none" stroke="#fff" stroke-width="1.400"><path d="M8 5h9q2 0 2 2v6q0 2-2 2H5q-2 0-2-2v-2M20.500 8.500v3" /><path d="M9 8h7v4.500H6z" fill="#fff" /><path d="M1 5h6M2.500 1v4M5.500 1v4M1.500 5.500q0 4 2.500 4t2.500-4" fill="#fff" /></svg>
        <div class="clock"><span>08:51:10 AM</span><span>24-06-2025</span></div>
      </div>
    </footer>
  </div>
</template>

<style>
html, body { margin: 0; background: #fff; overflow: hidden; }
</style>

<style scoped>
.app { width: 1919px; height: 1079px; display: flex; flex-direction: column; font-family: "Open Sans", "Noto Sans", sans-serif; font-size: 14.1px; color: #252423; overflow: hidden; background: #fff; }
.app * { box-sizing: border-box; }
.defs { position: absolute; }
svg { flex: none; display: block; overflow: visible; }
h1, h2, h3 { margin: 0; }

.titlebar { height: 43px; flex: none; background: #3b3a37; color: #fff; display: flex; align-items: center; }
.quick { width: 126px; padding: 0 0 0 20.5px; display: flex; gap: 20px; align-items: center; }
.quick svg:nth-child(3) { margin-left: -2px; }
.doc { width: 726px; display: flex; align-items: center; white-space: nowrap; padding-top: 6px; font-size: 14px; }
.doc i { font-style: normal; margin: 0 6px; font-size: 12px; }
.tri { border: 5.500px solid transparent; border-top: 6px solid #fff; border-bottom: 0; margin-left: 10px; margin-top: -2px; }
.topsearch { width: 500px; height: 30px; background: #d4d4d2; border-radius: 2px; display: flex; align-items: center; padding-left: 21px; gap: 14px; color: #1d5c50; font-size: 16.100px; margin-top: -1px; }
.win { flex: 1; display: flex; align-items: center; padding-left: 260.5px; }
.user { width: 98.5px; white-space: nowrap; }
.w1 { margin: 1px 0 0 40px; }
.w2 { margin: 3px 0 0 40px; }
.w3 { margin: 3px 0 0 41px; }

.tabs { height: 45px; flex: none; background: #fafafa; display: flex; padding: 0 6px 0 28px; font-size: 16.900px; position: relative; }
.tabcell { display: flex; white-space: nowrap; }
.tabcell span { line-height: 40px; height: 38px; }
.tabcell .on { font-weight: 600; font-size: 16.700px; border-bottom: 3px solid #117865; }
.share { margin: 5px 0 0 auto; width: 105px; height: 30px; border: 0; border-radius: 4px; background: #117865; color: #fff; font: 14px "Open Sans", sans-serif; display: flex; align-items: center; padding: 0 0 0 9px; gap: 0; }
.share span { margin: -1px 5px 0 10px; }

.ribbon { height: 112px; flex: none; background: #fafafa; display: flex; position: relative; z-index: 2; box-shadow: 0 1px 5px rgba(0, 0, 0, .28); }
.group { height: 110px; border-right: 1px solid #d2d0ce; display: flex; flex-direction: column; justify-content: space-between; flex: none; }
.items { display: flex; padding-top: 6px; }
.item { display: flex; flex-direction: column; align-items: center; flex: none; }
.item svg:first-child { margin-bottom: 3px; }
.lbl { line-height: 20px; height: 20px; white-space: nowrap; display: flex; align-items: center; font-size: 13.950px; }
.drop .lbl:last-child { margin-left: -4px; }
.item .car { margin: 2px 0 0 3px !important; }
.off .lbl:last-child { margin-left: -5px; }
.off { color: #c8c6c4; }
.gname { text-align: center; font-size: 11.800px; line-height: 15px; height: 14px; color: #3b3a39; }
.clip { width: 201px; }
.clip .gname { padding-right: 0; }
.clipbody { display: flex; color: #c8c6c4; }
.paste { width: 65px; padding: 6px 0 0 17px; display: flex; flex-direction: column; font-size: 13.900px; line-height: 20px; }
.paste svg { margin: 0 0 3px 3px; }
.cliplist { margin-top: -1px; }
.cliplist div { height: 30px; display: flex; align-items: center; gap: 4px; white-space: nowrap; font-size: 14px; }
.collapse { position: absolute; right: 5px; bottom: 7px; }

.body { flex: 1; display: flex; min-height: 0; height: 820px; }
.rail { width: 51px; background: #f3f2f1; border-right: 1px solid #dcdad8; flex: none; }
.railcell { height: 50px; display: flex; align-items: center; justify-content: center; border-left: 3px solid transparent; padding: 0 3px 2px 0; }
.railcell.sel { border-left-color: #117865; padding-bottom: 0; }
.work { width: 1417px; flex: none; display: flex; flex-direction: column; }
.main { flex: 1; display: flex; }
.canvas { width: 1166px; flex: none; overflow: hidden; height: 806px; }
.sheet { padding-left: 17px; height: 656px; overflow: hidden; }
.card { width: 831px; height: 656px; border: 1px solid #5b5a59; border-left-width: 2px; border-left-color: #605e5c; border-right-width: 2px; box-shadow: 0 0 16px rgba(0, 0, 0, .5); background: #fff; border-bottom-color: #a19f9d; }
.cardhead { height: 44px; border-bottom: 2px solid #b8b7b5; padding-left: 4px; display: flex; flex-direction: column; }
h1 { font: 700 15.100px/19px Roboto, sans-serif; text-decoration: underline; text-decoration-thickness: 1.500px; text-underline-offset: 2px; white-space: nowrap; letter-spacing: -.06px; }
h2 { font: italic 600 12.400px/22px "Open Sans", sans-serif; color: #605e5c; letter-spacing: 0; }
.legend { height: 32px; padding: 2px 0 0 4px; display: flex; align-items: center; font-size: 11.400px; color: #605e5c; }
.legend b { font-weight: 600; font-size: 11.900px; width: 47.5px; }
.legend span { display: flex; align-items: center; gap: 2px; margin-left: 6px; }
.legend .first { gap: 5.5px; margin-left: 5px; }
.plot { font-family: "Open Sans", sans-serif; margin-top: -1px; }
.tick, .cat { font-size: 10.500px; font-weight: 700; fill: #605e5c; }
.val { font-size: 10.700px; font-weight: 700; fill: #605e5c; }
.inner { font-size: 10.700px; fill: #fff; }
.axis { font: 700 13px Roboto, sans-serif; fill: #252423; }
.dotted { height: 2px; margin-left: 2px; background: repeating-linear-gradient(90deg, #484644 0 2px, transparent 2px 4px); }

.filters { flex: 1; border-left: 1px solid #a19f9d; padding-left: 10px; background: #fff; }
.phead { height: 50px; display: flex; align-items: center; }
.phead h3 { font-size: 18.300px; font-weight: 600; line-height: 24px; }
.filters .phead svg:first-child { margin: 0 9px 2px 4px; }
.filters .phead h3 { width: 139px; }
.filters .phead svg:last-child { margin-bottom: 3px; }
.eye { margin: 0 20px 5px 0; }
.fsearch { margin-top: 7px; width: 225px; height: 42px; border: 1px solid #a19f9d; border-radius: 2px; display: flex; align-items: center; gap: 12px; padding-left: 13px; font-size: 15.400px; color: #484644; }
.fsearch span { padding-top: 2px; }
.fsearch svg { margin-bottom: 3px; }
.rule { height: 1px; background: #a19f9d; margin: 5px 0 0 -10px; }
.fsec { height: 52px; padding: 0 15px 0 0; display: flex; align-items: center; justify-content: space-between; padding-top: 8px; }
.fsec.two { height: 65px; padding-top: 22px; }
.more { display: flex; gap: 4px; padding-top: 6px; }
.more i, .vmore i { width: 2px; height: 2px; background: #252423; display: block; }
.fbox { width: 230px; height: 57px; border: 1px solid #c8c6c4; border-radius: 2px; display: flex; align-items: center; justify-content: center; }
.up1 { padding-top: 2px; }

.strip { height: 14px; display: flex; background: #f3f2f1; flex: none; }
.views { width: 160px; padding-left: 12px; border-right: 1px solid #8a8886; }
.ptab { width: 94px; background: #fff; }
.gtab { width: 49px; background: #117865; }

.viz { width: 226px; flex: none; background: #f3f2f1; border-left: 1px solid #d2d0ce; }
.viz .phead { padding: 0 10px 0 10px; justify-content: space-between; }
.viz .phead h3 { font-size: 18.500px; }
.viz .phead svg { margin-bottom: 1px; }
.build { font-size: 13.700px; padding-left: 10px; height: 22px; line-height: 15px; font-weight: 600; }
.modes { display: flex; padding-left: 10px; gap: 48px; align-items: center; }
.mode { width: 40px; height: 40px; border-radius: 3px; background: #d2d0ce; display: flex; align-items: center; justify-content: center; }
.notch { margin-top: 5px; }
.vgrid { display: grid; grid-template-columns: repeat(6, 23px); gap: 12px; padding: 14px 0 0 14px; }
.vmore { display: flex; gap: 5px; padding: 20px 0 0 17px; }
.wells { border-top: 1px solid #d2d0ce; margin-top: 24px; padding-left: 5px; }
.wl { padding-left: 10px; height: 37px; line-height: 41px; }
.well { width: 213px; height: 35px; border: 1px dashed #c8c6c4; background: #fff; border-radius: 2px; padding-left: 12.500px; line-height: 33px; white-space: nowrap; }
.well.low { height: 33px; line-height: 32px; padding-left: 10px; margin-top: 6px; font-size: 14.200px; }
.drill { height: 38px; line-height: 48px; font-weight: 600; font-size: 13.900px; color: #484644; }
.trow { height: 34px; padding: 0 20px 0 10px; display: flex; align-items: center; justify-content: space-between; width: 213px; }
.tog { width: 40px; height: 20px; border: 1px solid #797775; border-radius: 10px; background: #fff; font-size: 10.800px; display: flex; align-items: center; justify-content: center; gap: 3px; color: #605e5c; }
.tog i { width: 10px; height: 10px; border-radius: 5px; background: #605e5c; }
.tog.act { background: #117865; border-color: #117865; color: #fff; }
.tog.act i { background: #fff; }

.data { flex: 1; background: #f3f2f1; border-left: 1px solid #d2d0ce; }
.data .phead { padding: 0 9px 0 10px; justify-content: space-between; }
.data .phead svg { margin-bottom: 1px; }
.dsearch { margin: 7px 0 0 5px; width: 215px; height: 31px; background: #fff; border: 1px solid #d2d0ce; border-bottom-color: #605e5c; border-radius: 4px; display: flex; align-items: center; padding-left: 14px; gap: 9px; font-size: 16px; color: #605e5c; }
.query { display: flex; align-items: center; height: 20px; margin-top: 15px; padding-left: 19px; }
.query svg:nth-child(2) { margin: 0 6px 0 9px; }

.taskbar { height: 59px; flex: none; background: #1c1c1c; border-top: 1px solid #3a3d38; display: flex; align-items: center; padding-left: 438px; color: #fff; position: relative; z-index: 3; }
.task { width: 55px; height: 58px; display: flex; align-items: center; justify-content: center; position: relative; flex: none; }
.badge { position: absolute; left: 25px; top: 8px; height: 21px; border-radius: 11px; background: #ff7f32; color: #000; font-size: 14px; line-height: 21px; padding: 0 5px; z-index: 1; }
.wide .badge { left: 20.5px; }
.dot::after { content: ""; position: absolute; left: 24px; top: 49px; width: 8px; height: 4px; border-radius: 2px; background: #9a9a9a; }
.active svg { position: relative; z-index: 1; }
.active::before { content: ""; position: absolute; left: 3px; top: 4px; width: 44px; height: 50px; border-radius: 5px; background: #2b2b2b; border: 1px solid #3a3a3a; box-shadow: 5px 0 0 -1px #2a2a2a; }
.active::after { content: ""; position: absolute; left: 18px; top: 49px; width: 20px; height: 4px; border-radius: 2px; background: #ff7f32; }
.tray { flex: 1; display: flex; align-items: center; padding: 0 23px 0 97px; font-size: 14.100px; white-space: nowrap; justify-content: flex-start; }
.up { margin-right: 24px; }
.cloud { margin-right: 22px; }
.lang { width: 32px; display: flex; flex-direction: column; align-items: center; line-height: 20px; margin-right: 21px; padding-bottom: 2px; }
.wifi { margin-right: 10px; }
.vol { margin-right: 9px; }
.clock { margin-left: auto; display: flex; flex-direction: column; align-items: flex-end; line-height: 20px; font-size: 14.300px; padding-bottom: 2px; }
</style>
